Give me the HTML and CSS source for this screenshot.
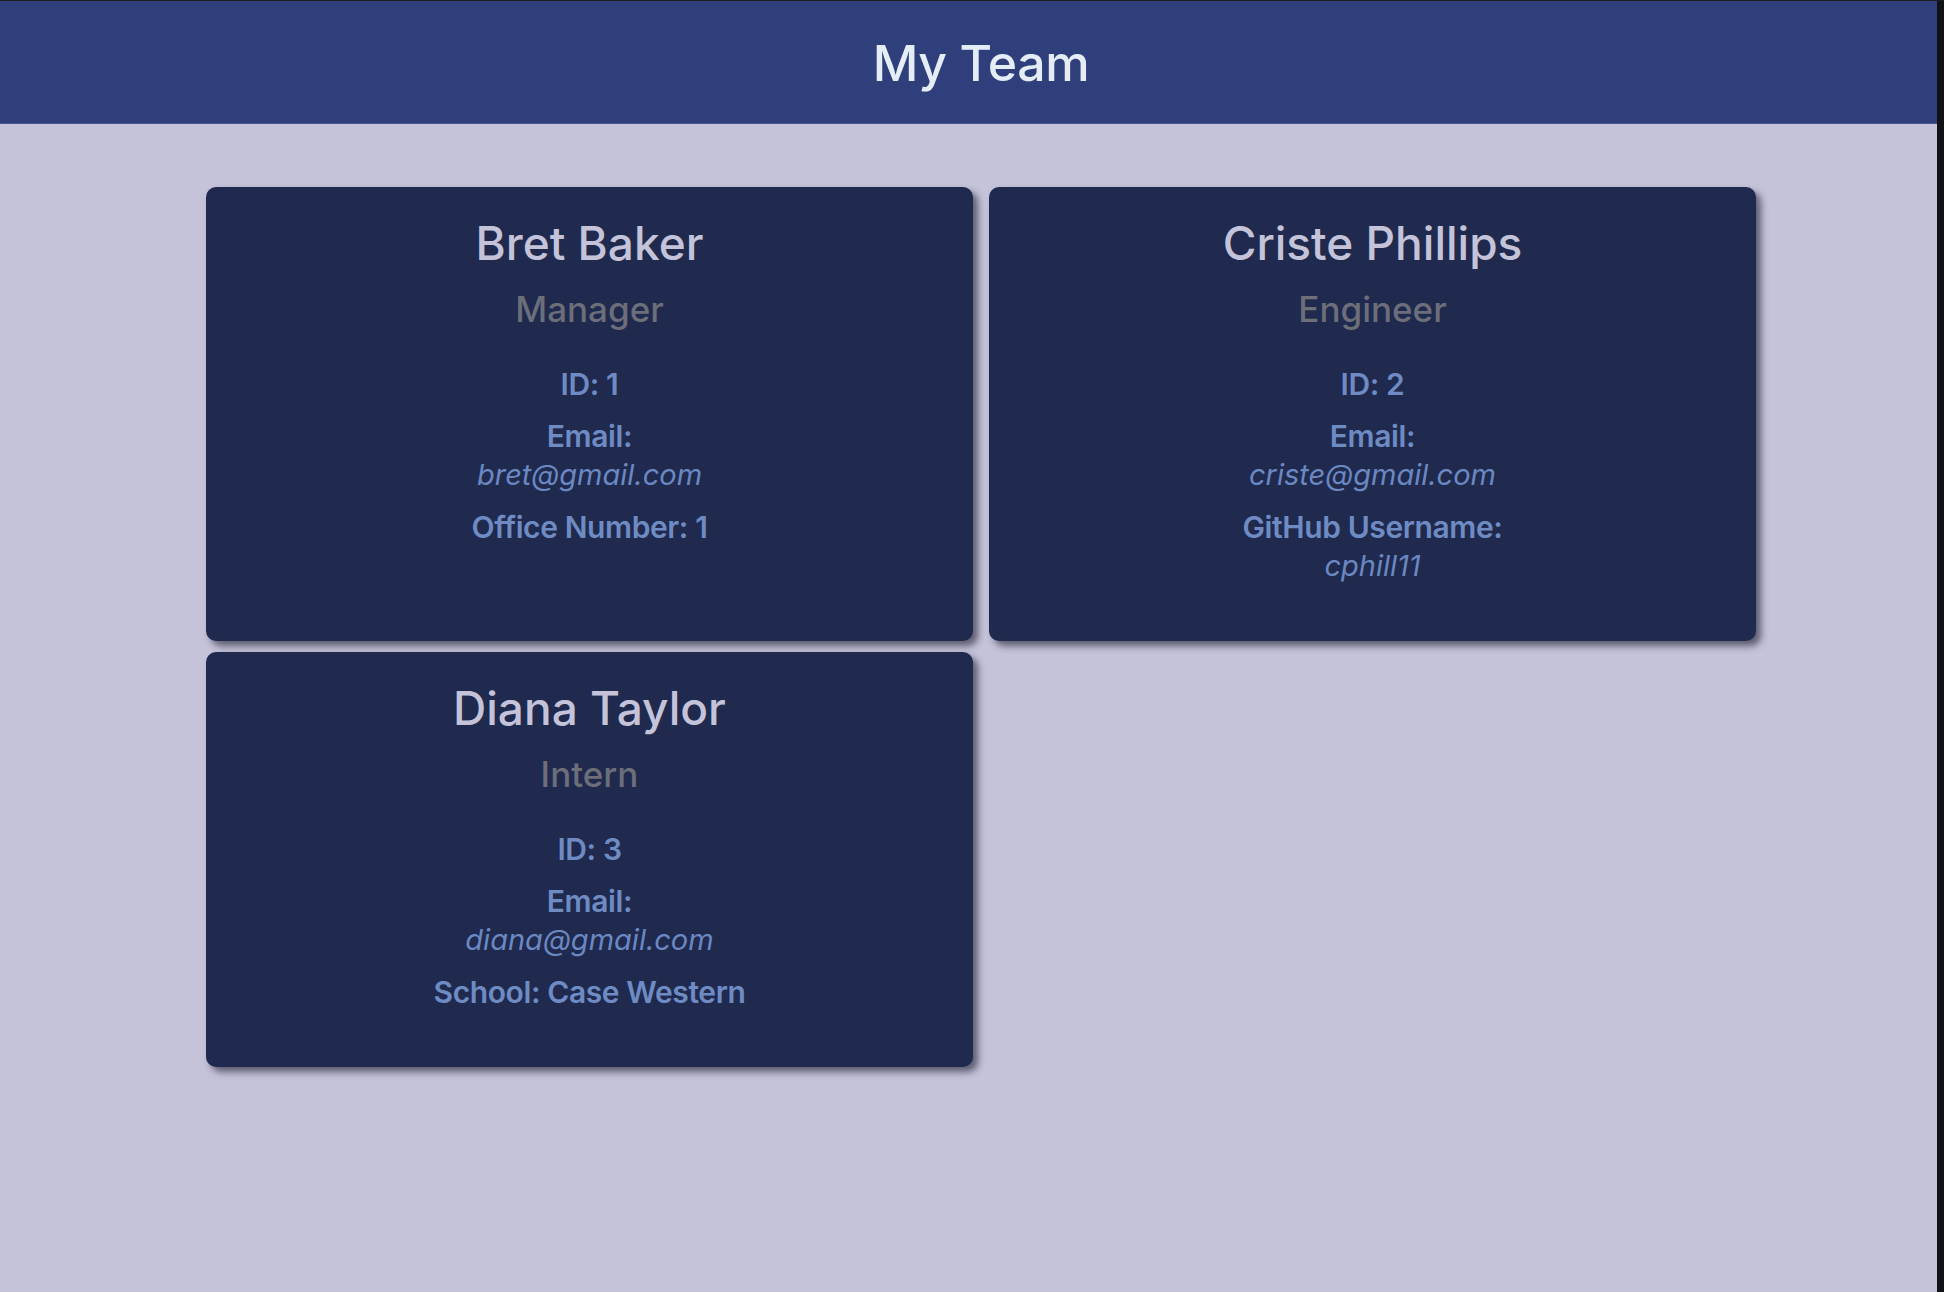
FILE: index.html
```html
<!DOCTYPE html>
<html lang="en">
<head>
<meta charset="utf-8">
<title>My Team</title>
<link rel="stylesheet" href="styles.css">
</head>
<body>
<div class="page">
  <header class="header">
    <h1 class="title">My Team</h1>
  </header>
  <main class="team">
    <section class="card">
      <h2 class="name">Bret Baker</h2>
      <h3 class="role">Manager</h3>
      <p class="info">ID: 1</p>
      <p class="info">Email:<br><a class="link" href="#">bret@gmail.com</a></p>
      <p class="info">Office Number: 1</p>
    </section>
    <section class="card">
      <h2 class="name">Criste Phillips</h2>
      <h3 class="role">Engineer</h3>
      <p class="info">ID: 2</p>
      <p class="info">Email:<br><a class="link" href="#">criste@gmail.com</a></p>
      <p class="info">GitHub Username:<br><a class="link" href="#">cphill11</a></p>
    </section>
    <section class="card">
      <h2 class="name">Diana Taylor</h2>
      <h3 class="role">Intern</h3>
      <p class="info">ID: 3</p>
      <p class="info">Email:<br><a class="link" href="#">diana@gmail.com</a></p>
      <p class="info">School: Case Western</p>
    </section>
  </main>
</div>
<div class="edge"></div>
</body>
</html>
```

FILE: styles.css
```css
html, body {
  margin: 0;
  padding: 0;
  height: 100%;
}
body {
  display: flex;
  background: #c4c3d9;
  border-top: 1px solid #1b1c1f;
  box-sizing: border-box;
  font-family: Inter, "Liberation Sans", sans-serif;
  overflow: hidden;
}
.page {
  flex: 1;
  min-width: 0;
}
.edge {
  width: 7px;
  flex: none;
  background: #101216;
}
.header {
  background: #2f3f7b;
  height: 123px;
  border-bottom: 1px solid #46558c;
  box-sizing: border-box;
  display: flex;
  align-items: center;
  justify-content: center;
  padding-left: 25px;
}
.title {
  margin: 0;
  color: #e4edf6;
  font-size: 50px;
  font-weight: 500;
  line-height: 60px;
  padding-top: 2px;
  letter-spacing: -0.4px;
}
.team {
  display: grid;
  grid-template-columns: 767px 767px;
  column-gap: 16px;
  row-gap: 11px;
  justify-content: center;
  padding-left: 25px;
  margin-top: 63px;
}
.card {
  background: #1f2a4e;
  border-radius: 10px;
  box-shadow: 5px 5px 7px rgba(25, 25, 45, 0.6);
  text-align: center;
  padding: 29px 20px 56px;
}
.name {
  margin: 0;
  color: #c4c3d9;
  font-size: 46px;
  font-weight: 500;
  line-height: 54px;
  letter-spacing: 0;
}
.role {
  margin: 19px 0 36px;
  color: #6c6e7a;
  font-size: 35px;
  font-weight: 500;
  line-height: 40px;
}
.info {
  margin: 0 0 14px;
  color: #6f8bc4;
  font-size: 30px;
  font-weight: 600;
  line-height: 38px;
  letter-spacing: -0.4px;
}
.info:last-child {
  margin-bottom: 0;
}
.link {
  color: #6b88c3;
  font-style: italic;
  font-weight: 400;
  font-size: 29px;
  letter-spacing: 0;
  text-decoration: none;
}
```
